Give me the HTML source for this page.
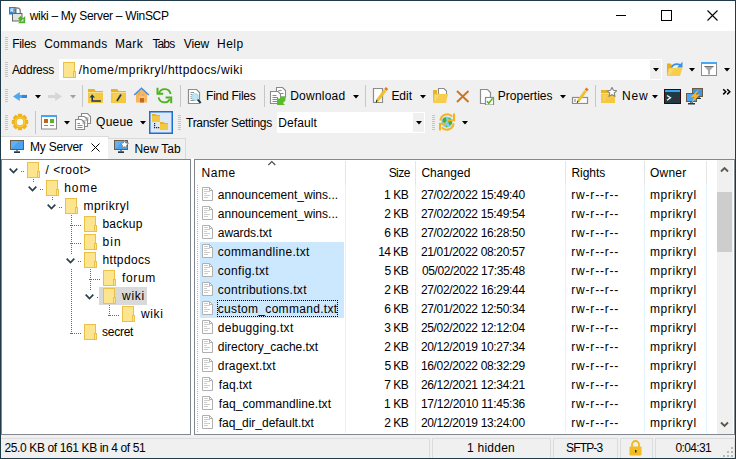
<!DOCTYPE html><html><head><meta charset="utf-8"><style>
*{margin:0;padding:0;box-sizing:border-box}
html,body{width:736px;height:459px;overflow:hidden;background:#f0f0f0}
.a{position:absolute;display:block}
.t{position:absolute;font-family:"Liberation Sans",sans-serif;font-size:12px;line-height:15px;white-space:pre;color:#000}
</style></head><body>
<div class="a" style="left:0px;top:0px;width:736px;height:31px;background:#fff"></div>
<svg class="a" style="left:8px;top:6px;" width="18" height="18" viewBox="0 0 18 18"><path d="M1 1H8.5V8.5H1Z" fill="#1f7fdc"/><path d="M2.3 2.3H6.5L5.2 3.6L7.2 5.6L5.6 7.2L3.6 5.2L2.3 6.5Z" fill="#bfe3ff"/><path d="M5.9 8V5.2a3.2 3.2 0 0 1 6.4 0V8" fill="none" stroke="#8c8c8c" stroke-width="1.5"/><rect x="4.5" y="7.5" width="9.5" height="7.5" fill="#e2e2e2" stroke="#666"/><path d="M17.2 10V17.2H10L12.3 14.9L10 12.6L12.6 10L14.9 12.3Z" fill="#4eb02c"/><path d="M12.5 15.5L15.5 12.5V15.5Z" fill="#fff" opacity="0.7"/></svg>
<div class="t" style="left:29.7px;top:9px;letter-spacing:-0.31px;">wiki – My Server – WinSCP</div>
<div class="a" style="left:616px;top:15px;width:10px;height:1px;background:#000"></div>
<svg class="a" style="left:661px;top:10px;" width="11" height="11" viewBox="0 0 11 11"><rect x="0.5" y="0.5" width="10" height="10" fill="none" stroke="#000"/></svg>
<svg class="a" style="left:707px;top:10px;" width="11" height="11" viewBox="0 0 11 11"><path d="M0.5 0.5L10.5 10.5M10.5 0.5L0.5 10.5" stroke="#000" stroke-width="1.1"/></svg>
<svg class="a" style="left:5px;top:37px;" width="3" height="13" viewBox="0 0 3 13"><rect x="0" y="0" width="3" height="1" fill="#c4c4c4"/><rect x="0" y="2" width="3" height="1" fill="#c4c4c4"/><rect x="0" y="4" width="3" height="1" fill="#c4c4c4"/><rect x="0" y="6" width="3" height="1" fill="#c4c4c4"/><rect x="0" y="8" width="3" height="1" fill="#c4c4c4"/><rect x="0" y="10" width="3" height="1" fill="#c4c4c4"/><rect x="0" y="12" width="3" height="1" fill="#c4c4c4"/></svg>
<div class="t" style="left:12.3px;top:37px;letter-spacing:-0.35px;">Files</div>
<div class="t" style="left:44.2px;top:37px;letter-spacing:0.24px;">Commands</div>
<div class="t" style="left:115.0px;top:37px;letter-spacing:0.33px;">Mark</div>
<div class="t" style="left:152.4px;top:37px;letter-spacing:-0.87px;">Tabs</div>
<div class="t" style="left:183.8px;top:37px;letter-spacing:-0.17px;">View</div>
<div class="t" style="left:217.1px;top:37px;letter-spacing:0.43px;">Help</div>
<svg class="a" style="left:5px;top:62px;" width="3" height="15" viewBox="0 0 3 15"><rect x="0" y="0" width="3" height="1" fill="#c4c4c4"/><rect x="0" y="2" width="3" height="1" fill="#c4c4c4"/><rect x="0" y="4" width="3" height="1" fill="#c4c4c4"/><rect x="0" y="6" width="3" height="1" fill="#c4c4c4"/><rect x="0" y="8" width="3" height="1" fill="#c4c4c4"/><rect x="0" y="10" width="3" height="1" fill="#c4c4c4"/><rect x="0" y="12" width="3" height="1" fill="#c4c4c4"/><rect x="0" y="14" width="3" height="1" fill="#c4c4c4"/></svg>
<div class="t" style="left:11.9px;top:63px;letter-spacing:-0.28px;">Address</div>
<div class="a" style="left:59px;top:59px;width:603px;height:21px;background:#fff"></div>
<div class="a" style="left:650px;top:60px;width:11px;height:19px;background:#f0f0f0"></div>
<svg class="a" style="left:653px;top:68px;" width="6" height="4" viewBox="0 0 6 4"><path d="M0 0H6L3 3.5Z" fill="#000"/></svg>
<svg class="a" style="left:63px;top:62px;" width="14" height="16" viewBox="0 0 14 16"><rect x="0.5" y="0.5" width="11" height="15" fill="#fde58f" stroke="#eac049"/><rect x="10.5" y="9.5" width="2" height="6" fill="#fde58f" stroke="#eac049"/></svg>
<div class="t" style="left:78.7px;top:63px;letter-spacing:0.48px;">/home/mprikryl/httpdocs/wiki</div>
<svg class="a" style="left:666px;top:61px;" width="17" height="16" viewBox="0 0 17 16"><path d="M1 2.5H4.5L5.5 3.5V15H1Z" fill="#e6ad1c"/><path d="M2.5 7H16.5L14 15H1Z" fill="#f6cd4e"/><path d="M3 8H8L4 14H2Z" fill="#fadb78" opacity="0.8"/><path d="M5.5 6.5A5.5 4 0 0 1 14.2 4" fill="none" stroke="#3a90e0" stroke-width="1.8"/><path d="M16.5 0.8V6.5H11Z" fill="#3a90e0"/></svg>
<svg class="a" style="left:689px;top:68px;" width="6" height="4" viewBox="0 0 6 4"><path d="M0 0H6L3 3.5Z" fill="#000"/></svg>
<svg class="a" style="left:701px;top:62px;" width="17" height="15" viewBox="0 0 17 15"><rect x="0.5" y="0.5" width="15" height="13" fill="#fff" stroke="#8c8c8c"/><rect x="0" y="0" width="16" height="2" fill="#4aa8f2"/><path d="M3 4H13L9 8.5V12.5H7V8.5Z" fill="#a8a8a8"/><path d="M3 4H13L12 5H4Z" fill="#707070"/></svg>
<svg class="a" style="left:724px;top:68px;" width="6" height="4" viewBox="0 0 6 4"><path d="M0 0H6L3 3.5Z" fill="#000"/></svg>
<svg class="a" style="left:5px;top:89px;" width="3" height="13" viewBox="0 0 3 13"><rect x="0" y="0" width="3" height="1" fill="#c4c4c4"/><rect x="0" y="2" width="3" height="1" fill="#c4c4c4"/><rect x="0" y="4" width="3" height="1" fill="#c4c4c4"/><rect x="0" y="6" width="3" height="1" fill="#c4c4c4"/><rect x="0" y="8" width="3" height="1" fill="#c4c4c4"/><rect x="0" y="10" width="3" height="1" fill="#c4c4c4"/><rect x="0" y="12" width="3" height="1" fill="#c4c4c4"/></svg>
<div class="a" style="left:82px;top:85px;width:1px;height:22px;background:#c6c6c6"></div>
<div class="a" style="left:180px;top:85px;width:1px;height:22px;background:#c6c6c6"></div>
<div class="a" style="left:264px;top:85px;width:1px;height:22px;background:#c6c6c6"></div>
<div class="a" style="left:365px;top:85px;width:1px;height:22px;background:#c6c6c6"></div>
<div class="a" style="left:595px;top:85px;width:1px;height:22px;background:#c6c6c6"></div>
<svg class="a" style="left:35px;top:95px;" width="6" height="4" viewBox="0 0 6 4"><path d="M0 0H6L3 3.5Z" fill="#000"/></svg>
<svg class="a" style="left:12px;top:91px;" width="17" height="11" viewBox="0 0 17 11"><path d="M1 5.4L7.8 0.9V3.9H15V7H7.8V9.9Z" fill="#4ea9f0"/><rect x="10" y="3.9" width="5" height="3.1" fill="#2f86dc"/></svg>
<svg class="a" style="left:47px;top:91px;" width="17" height="11" viewBox="0 0 17 11"><path d="M15 5.4L8.2 0.9V3.9H1V7H8.2V9.9Z" fill="#d6d6d6"/></svg>
<svg class="a" style="left:87px;top:88px;" width="17" height="16" viewBox="0 0 17 16"><path d="M1 1H7.5L8.5 3H16V15H1Z" fill="#e9b424"/><rect x="1" y="4" width="15" height="11" fill="#f5c842"/><rect x="1" y="4" width="15" height="1" fill="#fbe08a"/><path d="M3 6H9L4 14H3Z" fill="#f8d566" opacity="0.6"/><path d="M5.2 8.5V13H14" fill="none" stroke="#1d3a52" stroke-width="1.6"/><path d="M2.5 9.5L5.2 6.2L7.9 9.5Z" fill="#1d3a52"/></svg>
<svg class="a" style="left:110px;top:88px;" width="17" height="16" viewBox="0 0 17 16"><path d="M1 1H7.5L8.5 3H16V15H1Z" fill="#e9b424"/><rect x="1" y="4" width="15" height="11" fill="#f5c842"/><rect x="1" y="4" width="15" height="1" fill="#fbe08a"/><path d="M3 6H9L4 14H3Z" fill="#f8d566" opacity="0.6"/><path d="M7 13L11 6.5" stroke="#1d3a52" stroke-width="1.7"/></svg>
<svg class="a" style="left:133px;top:87px;" width="17" height="16" viewBox="0 0 17 16"><path d="M3 7L8.5 2.2L14 7V15.5H3Z" fill="#f8b45e"/><path d="M1.2 8L8.5 1.3L15.8 8" fill="none" stroke="#3b8fe2" stroke-width="1.5"/><rect x="7" y="10.5" width="4" height="5" fill="#c26a1a"/><rect x="6.3" y="9.8" width="5.4" height="0.9" fill="#fde6b8"/><circle cx="6" cy="6.5" r="0.7" fill="#7ab0e0"/><circle cx="10" cy="8" r="0.7" fill="#7ab0e0"/></svg>
<svg class="a" style="left:156px;top:87px;" width="17" height="17" viewBox="0 0 17 17"><path d="M3 6.2A6 6 0 0 1 14.6 7" fill="none" stroke="#4cb41c" stroke-width="1.8"/><path d="M1.5 0.8V6.8H7.2" fill="none" stroke="#4cb41c" stroke-width="2"/><path d="M2.6 10.3A6 6 0 0 0 13.8 12.2" fill="none" stroke="#4cb41c" stroke-width="1.8"/><path d="M9.6 10.5H15.2V16.2" fill="none" stroke="#4cb41c" stroke-width="2"/></svg>
<svg class="a" style="left:187px;top:88px;" width="17" height="17" viewBox="0 0 17 17"><path d="M1.5 1.5H9.5L12.5 4.5V15.5H1.5Z" fill="#fff" stroke="#8c8c8c" stroke-width="1.2"/><path d="M3.5 4.5H7M3.5 6.5H8M3.5 8.5H5M3.5 10.5H5M3.5 12.5H8" stroke="#909090"/><circle cx="8" cy="9" r="3.4" fill="#b8e8f6" stroke="#a8c8d0" stroke-width="0.7"/><path d="M10.6 11.6L13.8 14.8" stroke="#1b3545" stroke-width="1.9"/></svg>
<svg class="a" style="left:269px;top:87px;" width="18" height="18" viewBox="0 0 18 18"><path d="M7.5 0.5H13.5L16.5 3.5V10H7.5Z" fill="#fff" stroke="#8a8a8a" stroke-width="1.1"/><path d="M9.5 3.5H12.5M9.5 6.5H14.5" stroke="#8a8a8a"/><path d="M1.5 4.5H9L11.5 7V16.5H1.5Z" fill="#fff" stroke="#8a8a8a" stroke-width="1.1"/><path d="M3.5 8.5H7.5M3.5 10.5H9M3.5 12.5H8M3.5 14.5H8" stroke="#8a8a8a"/><path d="M8 10L10 12L12.5 9.5H16.5V13.5L14 16L16 18H8Z" fill="#58bb28"/></svg>
<svg class="a" style="left:372px;top:87px;" width="17" height="17" viewBox="0 0 17 17"><path d="M1.5 1.5H10.5V15.5H1.5Z" fill="#fff" stroke="#8c8c8c" stroke-width="1.2"/><path d="M5 14L13 3.5" stroke="#efc02e" stroke-width="3"/><path d="M4.2 15.5L5 13" stroke="#333" stroke-width="1.2"/><path d="M13.3 3L15 1" stroke="#e27c12" stroke-width="3"/></svg>
<svg class="a" style="left:431px;top:87px;" width="17" height="17" viewBox="0 0 17 17"><path d="M2 3H6V15H2Z" fill="#e9b424"/><path d="M7.5 1.5H13L15.5 4V9H7.5Z" fill="#fff" stroke="#8c8c8c" stroke-width="1.1"/><path d="M3 7H17L15 16H2Z" fill="#f6cd4e"/><path d="M4 8L8 8L4 15Z" fill="#fadf80" opacity="0.7"/></svg>
<svg class="a" style="left:456px;top:90px;" width="14" height="13" viewBox="0 0 14 13"><path d="M1 1L12.5 12M12.5 1L1 12" stroke="#d0741a" stroke-width="1.9"/></svg>
<svg class="a" style="left:478px;top:88px;" width="17" height="17" viewBox="0 0 17 17"><path d="M2.5 1.5H9.5L12.5 4.5V15.5H2.5Z" fill="#fff" stroke="#8c8c8c" stroke-width="1.2"/><rect x="7.5" y="9.5" width="8" height="7.5" fill="#fff" stroke="#8c8c8c" stroke-width="1.2"/><path d="M9 13.3L10.8 15.3L14.6 10.4" fill="none" stroke="#4ab81e" stroke-width="1.5"/></svg>
<svg class="a" style="left:571px;top:87px;" width="18" height="17" viewBox="0 0 18 17"><rect x="1.5" y="10.5" width="15" height="6" fill="#fff" stroke="#8c8c8c" stroke-width="1.2"/><path d="M4 12V15" stroke="#8c8c8c" stroke-width="1.2"/><path d="M7 14.5L14.5 4" stroke="#efc02e" stroke-width="3"/><path d="M6.2 15.8L7 14" stroke="#333" stroke-width="1.2"/><path d="M14.8 3.5L16.5 1.5" stroke="#e27c12" stroke-width="3"/></svg>
<svg class="a" style="left:599px;top:87px;" width="18" height="17" viewBox="0 0 18 17"><g transform="translate(1 2)"><path d="M1 1H7L8.5 3H15V14H1Z" fill="#e9b424"/><rect x="1" y="4" width="14" height="10" fill="#f5c842"/><rect x="1" y="4" width="14" height="1" fill="#fbe08a"/><path d="M2.5 6H8L3.5 13H2.5Z" fill="#f8d566" opacity="0.6"/></g><path d="M13.00 0.40L14.41 3.36L17.66 3.79L15.28 6.04L15.88 9.26L13.00 7.70L10.12 9.26L10.72 6.04L8.34 3.79L11.59 3.36Z" fill="#fff" stroke="#858585" stroke-width="1.1"/></svg>
<svg class="a" style="left:664px;top:89px;" width="17" height="15" viewBox="0 0 17 15"><rect x="0.5" y="0.5" width="16" height="14" fill="#1e3c46" stroke="#2a0a10"/><rect x="1" y="1" width="15" height="2" fill="#3aa2f2"/><path d="M3 6.5L6.5 8.8L3 11.2" fill="none" stroke="#fff" stroke-width="1.3"/><path d="M11 6h1v1h-1zM13 5h1v1h-1zM12 8h1v1h-1zM10 9h1v1h-1zM14 9h1v1h-1zM13 11h1v1h-1zM11 12h1v1h-1z" fill="#5a1a20"/></svg>
<svg class="a" style="left:686px;top:88px;" width="18" height="17" viewBox="0 0 18 17"><rect x="6.5" y="0.5" width="10" height="8" fill="#3c96e6" stroke="#6a5a44"/><rect x="10" y="9" width="4" height="1" fill="#777"/><rect x="9" y="10" width="6" height="1" fill="#1d3a48"/><rect x="0.5" y="5.5" width="10" height="8" fill="#4aa6f0" stroke="#6a5a44"/><rect x="4" y="14" width="3" height="1" fill="#777"/><rect x="2" y="15" width="7" height="1.5" fill="#1d3a48"/><path d="M13 1L4.5 9H8.5L5 15.5L14 6.5H10Z" fill="#f5b42a"/></svg>
<svg class="a" style="left:70px;top:95px;" width="6" height="4" viewBox="0 0 6 4"><path d="M0 0H6L3 3.5Z" fill="#a0a0a0"/></svg>
<div class="t" style="left:206.1px;top:89px;letter-spacing:-0.27px;">Find Files</div>
<div class="t" style="left:290.2px;top:89px;letter-spacing:0.23px;">Download</div>
<svg class="a" style="left:353px;top:95px;" width="6" height="4" viewBox="0 0 6 4"><path d="M0 0H6L3 3.5Z" fill="#000"/></svg>
<div class="t" style="left:391.4px;top:89px;letter-spacing:-0.03px;">Edit</div>
<svg class="a" style="left:420px;top:95px;" width="6" height="4" viewBox="0 0 6 4"><path d="M0 0H6L3 3.5Z" fill="#000"/></svg>
<div class="t" style="left:497.8px;top:89px;letter-spacing:0.00px;">Properties</div>
<svg class="a" style="left:560px;top:95px;" width="6" height="4" viewBox="0 0 6 4"><path d="M0 0H6L3 3.5Z" fill="#000"/></svg>
<div class="t" style="left:622.0px;top:89px;letter-spacing:0.85px;">New</div>
<svg class="a" style="left:652px;top:95px;" width="6" height="4" viewBox="0 0 6 4"><path d="M0 0H6L3 3.5Z" fill="#000"/></svg>
<svg class="a" style="left:722px;top:88px;" width="10" height="8" viewBox="0 0 10 8"><path d="M1.2 1.2L3.8 3.8L1.2 6.4M5.2 1.2L7.8 3.8L5.2 6.4" fill="none" stroke="#000" stroke-width="1.5"/></svg>
<svg class="a" style="left:5px;top:115px;" width="3" height="15" viewBox="0 0 3 15"><rect x="0" y="0" width="3" height="1" fill="#c4c4c4"/><rect x="0" y="2" width="3" height="1" fill="#c4c4c4"/><rect x="0" y="4" width="3" height="1" fill="#c4c4c4"/><rect x="0" y="6" width="3" height="1" fill="#c4c4c4"/><rect x="0" y="8" width="3" height="1" fill="#c4c4c4"/><rect x="0" y="10" width="3" height="1" fill="#c4c4c4"/><rect x="0" y="12" width="3" height="1" fill="#c4c4c4"/><rect x="0" y="14" width="3" height="1" fill="#c4c4c4"/></svg>
<div class="a" style="left:35px;top:111px;width:1px;height:23px;background:#c6c6c6"></div>
<svg class="a" style="left:64px;top:121px;" width="6" height="4" viewBox="0 0 6 4"><path d="M0 0H6L3 3.5Z" fill="#000"/></svg>
<svg class="a" style="left:11px;top:113px;" width="18" height="18" viewBox="0 0 18 18"><g transform="translate(9 9)"><rect x="-2.2" y="-8.2" width="4.4" height="4" rx="0.6" fill="#f0b41a" transform="rotate(0)"/><rect x="-2.2" y="-8.2" width="4.4" height="4" rx="0.6" fill="#f0b41a" transform="rotate(45)"/><rect x="-2.2" y="-8.2" width="4.4" height="4" rx="0.6" fill="#f0b41a" transform="rotate(90)"/><rect x="-2.2" y="-8.2" width="4.4" height="4" rx="0.6" fill="#f0b41a" transform="rotate(135)"/><rect x="-2.2" y="-8.2" width="4.4" height="4" rx="0.6" fill="#f0b41a" transform="rotate(180)"/><rect x="-2.2" y="-8.2" width="4.4" height="4" rx="0.6" fill="#f0b41a" transform="rotate(225)"/><rect x="-2.2" y="-8.2" width="4.4" height="4" rx="0.6" fill="#f0b41a" transform="rotate(270)"/><rect x="-2.2" y="-8.2" width="4.4" height="4" rx="0.6" fill="#f0b41a" transform="rotate(315)"/><circle r="6.2" fill="#f0b41a"/><circle r="5.3" fill="#f6cb45"/><circle r="4.1" fill="#eeb21a"/><circle r="3.3" fill="#fbfaf4"/></g></svg>
<svg class="a" style="left:41px;top:115px;" width="16" height="15" viewBox="0 0 16 15"><rect x="0.5" y="0.5" width="15" height="13.5" fill="#fff" stroke="#8a8a8a"/><rect x="0" y="0" width="16" height="2" fill="#42a4f2"/><rect x="3" y="4" width="4" height="4" fill="#c06418"/><rect x="9" y="4" width="4" height="4" fill="#52b62e"/><path d="M3 10.5H7M9 10.5H13" stroke="#8a8a8a"/></svg>
<svg class="a" style="left:75px;top:113px;" width="17" height="17" viewBox="0 0 17 17"><path d="M6.5 0.5H12.5L15.5 3.5V10.5H6.5Z" fill="#fff" stroke="#8a8a8a" stroke-width="1.1"/><path d="M3.5 3.5H9.5L12.5 6.5V13.5H3.5Z" fill="#fff" stroke="#8a8a8a" stroke-width="1.1"/><path d="M0.5 6.5H6.5L9.5 9.5V16.5H0.5Z" fill="#fff" stroke="#8a8a8a" stroke-width="1.1"/><path d="M10.5 5H13.5M10.5 7H13.5M7.5 8H10.5M7.5 10H10.5M2.5 10.5H5M2.5 12.5H7.5M2.5 14.5H7.5" stroke="#8a8a8a" stroke-width="1"/></svg>
<svg class="a" style="left:149px;top:111px;" width="24" height="23" viewBox="0 0 24 23"><rect x="0.75" y="0.75" width="22.5" height="21.5" fill="#dfe9f5" stroke="#1a6fcf" stroke-width="1.5"/><path d="M3 3H6.5L7.5 4H11V11H3Z" fill="#e9b424"/><rect x="3" y="5" width="8" height="6" fill="#f5c842"/><path d="M11 11H14.5L15.5 12H19V19H11Z" fill="#e9b424"/><rect x="11" y="13" width="8" height="6" fill="#f5c842"/><path d="M5 12h1.2v1.2h-1.2zM5 14h1.2v1.2h-1.2zM5 16h1.2v1.2h-1.2zM7 16h1.2v1.2h-1.2zM9 16h1.2v1.2h-1.2z" fill="#222"/></svg>
<svg class="a" style="left:438px;top:113px;" width="18" height="18" viewBox="0 0 18 18"><circle cx="9" cy="9" r="5.6" fill="#80ccf4"/><path d="M5 5.5L7.8 4.2L8.6 7.5L6.5 10.2L4.4 8.6Z M10.8 4.6L13.6 6.5L14 10.5L11.8 12.6L10.4 10Z M7.5 12.6L9.6 13.6L8.4 14.5Z" fill="#46b02a"/><path d="M2.4 7.6A6.8 6.8 0 0 1 14.2 3.6" fill="none" stroke="#f5b324" stroke-width="2.1"/><path d="M16 0.5V7.3H9.8" fill="none" stroke="#f5b324" stroke-width="2.1"/><path d="M15.6 10.4A6.8 6.8 0 0 1 3.8 14.4" fill="none" stroke="#f5b324" stroke-width="2.1"/><path d="M2 17.5V10.7H8.2" fill="none" stroke="#f5b324" stroke-width="2.1"/></svg>
<div class="t" style="left:96.1px;top:115px;letter-spacing:0.21px;">Queue</div>
<svg class="a" style="left:140px;top:121px;" width="6" height="4" viewBox="0 0 6 4"><path d="M0 0H6L3 3.5Z" fill="#000"/></svg>
<svg class="a" style="left:178px;top:115px;" width="3" height="15" viewBox="0 0 3 15"><rect x="0" y="0" width="3" height="1" fill="#c4c4c4"/><rect x="0" y="2" width="3" height="1" fill="#c4c4c4"/><rect x="0" y="4" width="3" height="1" fill="#c4c4c4"/><rect x="0" y="6" width="3" height="1" fill="#c4c4c4"/><rect x="0" y="8" width="3" height="1" fill="#c4c4c4"/><rect x="0" y="10" width="3" height="1" fill="#c4c4c4"/><rect x="0" y="12" width="3" height="1" fill="#c4c4c4"/><rect x="0" y="14" width="3" height="1" fill="#c4c4c4"/></svg>
<div class="t" style="left:186.1px;top:116px;letter-spacing:-0.30px;">Transfer Settings</div>
<div class="a" style="left:277px;top:112px;width:148px;height:21px;background:#fff"></div>
<div class="a" style="left:413px;top:113px;width:11px;height:19px;background:#f0f0f0"></div>
<svg class="a" style="left:416px;top:121px;" width="6" height="4" viewBox="0 0 6 4"><path d="M0 0H6L3 3.5Z" fill="#000"/></svg>
<div class="t" style="left:278.3px;top:116px;letter-spacing:0.07px;">Default</div>
<svg class="a" style="left:432px;top:115px;" width="3" height="15" viewBox="0 0 3 15"><rect x="0" y="0" width="3" height="1" fill="#c4c4c4"/><rect x="0" y="2" width="3" height="1" fill="#c4c4c4"/><rect x="0" y="4" width="3" height="1" fill="#c4c4c4"/><rect x="0" y="6" width="3" height="1" fill="#c4c4c4"/><rect x="0" y="8" width="3" height="1" fill="#c4c4c4"/><rect x="0" y="10" width="3" height="1" fill="#c4c4c4"/><rect x="0" y="12" width="3" height="1" fill="#c4c4c4"/><rect x="0" y="14" width="3" height="1" fill="#c4c4c4"/></svg>
<svg class="a" style="left:462px;top:121px;" width="6" height="4" viewBox="0 0 6 4"><path d="M0 0H6L3 3.5Z" fill="#000"/></svg>
<div class="a" style="left:1px;top:136px;width:108px;height:24px;background:#fff;border-top:1px solid #dadada;border-right:1px solid #dadada"></div>
<div class="a" style="left:108px;top:138px;width:78px;height:22px;background:#f0f0f0;border-top:1px solid #dadada;border-right:1px solid #dadada"></div>
<div class="t" style="left:30.1px;top:140px;letter-spacing:-0.24px;">My Server</div>
<svg class="a" style="left:10px;top:140px;" width="15" height="14" viewBox="0 0 15 14"><rect x="0.5" y="0.5" width="13" height="9" fill="#4aa2f0" stroke="#6b5d45"/><path d="M1 1H9L1 9Z" fill="#6cb8f6" opacity="0.7"/><rect x="6" y="10" width="2" height="1.3" fill="#8a8a8a"/><rect x="4" y="11.3" width="6" height="1.7" fill="#1d3a48"/></svg>
<svg class="a" style="left:114px;top:140px;" width="15" height="14" viewBox="0 0 15 14"><rect x="0.5" y="0.5" width="13" height="9" fill="#4aa2f0" stroke="#6b5d45"/><path d="M1 1H9L1 9Z" fill="#6cb8f6" opacity="0.7"/><rect x="6" y="10" width="2" height="1.3" fill="#8a8a8a"/><rect x="4" y="11.3" width="6" height="1.7" fill="#1d3a48"/><path d="M10.50 0.30L11.73 2.90L14.59 3.27L12.50 5.25L13.03 8.08L10.50 6.70L7.97 8.08L8.50 5.25L6.41 3.27L9.27 2.90Z" fill="#fff" stroke="#858585" stroke-width="1"/></svg>
<svg class="a" style="left:91px;top:143px;" width="9" height="9" viewBox="0 0 9 9"><path d="M0.5 0.5L8.5 8.5M8.5 0.5L0.5 8.5" stroke="#000" stroke-width="1"/></svg>
<div class="t" style="left:134.5px;top:142px;letter-spacing:-0.07px;">New Tab</div>
<div class="a" style="left:191px;top:158px;width:3px;height:277px;background:#fff"></div>
<div class="a" style="left:1px;top:159px;width:190px;height:276px;background:#fff;border:1px solid #828790"></div>
<div class="a" style="left:194px;top:159px;width:541px;height:276px;background:#fff;border:1px solid #828790"></div>
<div class="a" style="left:33px;top:179px;width:1px;height:11px;background:repeating-linear-gradient(to bottom,#6a6a6a 0 1px,transparent 1px 2px)"></div>
<div class="a" style="left:52px;top:197px;width:1px;height:11px;background:repeating-linear-gradient(to bottom,#6a6a6a 0 1px,transparent 1px 2px)"></div>
<div class="a" style="left:71px;top:215px;width:1px;height:119px;background:repeating-linear-gradient(to bottom,#6a6a6a 0 1px,transparent 1px 2px)"></div>
<div class="a" style="left:90px;top:269px;width:1px;height:29px;background:repeating-linear-gradient(to bottom,#6a6a6a 0 1px,transparent 1px 2px)"></div>
<div class="a" style="left:109px;top:305px;width:1px;height:11px;background:repeating-linear-gradient(to bottom,#6a6a6a 0 1px,transparent 1px 2px)"></div>
<div class="a" style="left:13px;top:171px;width:12px;height:1px;background:repeating-linear-gradient(to right,#6a6a6a 0 1px,transparent 1px 2px)"></div>
<div class="a" style="left:6px;top:165px;width:14px;height:13px;background:#fff"></div>
<div class="a" style="left:32px;top:189px;width:12px;height:1px;background:repeating-linear-gradient(to right,#6a6a6a 0 1px,transparent 1px 2px)"></div>
<div class="a" style="left:25px;top:183px;width:14px;height:13px;background:#fff"></div>
<div class="a" style="left:51px;top:207px;width:12px;height:1px;background:repeating-linear-gradient(to right,#6a6a6a 0 1px,transparent 1px 2px)"></div>
<div class="a" style="left:44px;top:201px;width:14px;height:13px;background:#fff"></div>
<div class="a" style="left:70px;top:225px;width:12px;height:1px;background:repeating-linear-gradient(to right,#6a6a6a 0 1px,transparent 1px 2px)"></div>
<div class="a" style="left:70px;top:243px;width:12px;height:1px;background:repeating-linear-gradient(to right,#6a6a6a 0 1px,transparent 1px 2px)"></div>
<div class="a" style="left:70px;top:261px;width:12px;height:1px;background:repeating-linear-gradient(to right,#6a6a6a 0 1px,transparent 1px 2px)"></div>
<div class="a" style="left:63px;top:255px;width:14px;height:13px;background:#fff"></div>
<div class="a" style="left:89px;top:279px;width:12px;height:1px;background:repeating-linear-gradient(to right,#6a6a6a 0 1px,transparent 1px 2px)"></div>
<div class="a" style="left:89px;top:297px;width:12px;height:1px;background:repeating-linear-gradient(to right,#6a6a6a 0 1px,transparent 1px 2px)"></div>
<div class="a" style="left:82px;top:291px;width:14px;height:13px;background:#fff"></div>
<div class="a" style="left:108px;top:315px;width:12px;height:1px;background:repeating-linear-gradient(to right,#6a6a6a 0 1px,transparent 1px 2px)"></div>
<div class="a" style="left:70px;top:333px;width:12px;height:1px;background:repeating-linear-gradient(to right,#6a6a6a 0 1px,transparent 1px 2px)"></div>
<svg class="a" style="left:9px;top:168px;" width="9" height="6" viewBox="0 0 9 6"><path d="M0.7 0.7L4.5 4.5L8.3 0.7" fill="none" stroke="#2b3e4a" stroke-width="1.7"/></svg>
<svg class="a" style="left:27px;top:162px;" width="14" height="16" viewBox="0 0 14 16"><rect x="0.5" y="0.5" width="11" height="15" fill="#fde58f" stroke="#eac049"/><rect x="10.5" y="9.5" width="2" height="6" fill="#fde58f" stroke="#eac049"/></svg>
<div class="t" style="left:45.6px;top:163px;letter-spacing:0.51px;">/ &lt;root&gt;</div>
<svg class="a" style="left:28px;top:186px;" width="9" height="6" viewBox="0 0 9 6"><path d="M0.7 0.7L4.5 4.5L8.3 0.7" fill="none" stroke="#2b3e4a" stroke-width="1.7"/></svg>
<svg class="a" style="left:46px;top:180px;" width="14" height="16" viewBox="0 0 14 16"><rect x="0.5" y="0.5" width="11" height="15" fill="#fde58f" stroke="#eac049"/><rect x="10.5" y="9.5" width="2" height="6" fill="#fde58f" stroke="#eac049"/></svg>
<div class="t" style="left:64.2px;top:181px;letter-spacing:0.97px;">home</div>
<svg class="a" style="left:47px;top:204px;" width="9" height="6" viewBox="0 0 9 6"><path d="M0.7 0.7L4.5 4.5L8.3 0.7" fill="none" stroke="#2b3e4a" stroke-width="1.7"/></svg>
<svg class="a" style="left:65px;top:198px;" width="14" height="16" viewBox="0 0 14 16"><rect x="0.5" y="0.5" width="11" height="15" fill="#fde58f" stroke="#eac049"/><rect x="10.5" y="9.5" width="2" height="6" fill="#fde58f" stroke="#eac049"/></svg>
<div class="t" style="left:83.4px;top:199px;letter-spacing:0.51px;">mprikryl</div>
<svg class="a" style="left:84px;top:216px;" width="14" height="16" viewBox="0 0 14 16"><rect x="0.5" y="0.5" width="11" height="15" fill="#fde58f" stroke="#eac049"/><rect x="10.5" y="9.5" width="2" height="6" fill="#fde58f" stroke="#eac049"/></svg>
<div class="t" style="left:102.4px;top:217px;letter-spacing:0.28px;">backup</div>
<svg class="a" style="left:84px;top:234px;" width="14" height="16" viewBox="0 0 14 16"><rect x="0.5" y="0.5" width="11" height="15" fill="#fde58f" stroke="#eac049"/><rect x="10.5" y="9.5" width="2" height="6" fill="#fde58f" stroke="#eac049"/></svg>
<div class="t" style="left:102.4px;top:235px;letter-spacing:1.10px;">bin</div>
<svg class="a" style="left:66px;top:258px;" width="9" height="6" viewBox="0 0 9 6"><path d="M0.7 0.7L4.5 4.5L8.3 0.7" fill="none" stroke="#2b3e4a" stroke-width="1.7"/></svg>
<svg class="a" style="left:84px;top:252px;" width="14" height="16" viewBox="0 0 14 16"><rect x="0.5" y="0.5" width="11" height="15" fill="#fde58f" stroke="#eac049"/><rect x="10.5" y="9.5" width="2" height="6" fill="#fde58f" stroke="#eac049"/></svg>
<div class="t" style="left:102.4px;top:253px;letter-spacing:0.37px;">httpdocs</div>
<svg class="a" style="left:103px;top:270px;" width="14" height="16" viewBox="0 0 14 16"><rect x="0.5" y="0.5" width="11" height="15" fill="#fde58f" stroke="#eac049"/><rect x="10.5" y="9.5" width="2" height="6" fill="#fde58f" stroke="#eac049"/></svg>
<div class="t" style="left:122.1px;top:271px;letter-spacing:0.60px;">forum</div>
<div class="a" style="left:99px;top:287px;width:48px;height:18px;background:#d9d9d9"></div>
<svg class="a" style="left:85px;top:294px;" width="9" height="6" viewBox="0 0 9 6"><path d="M0.7 0.7L4.5 4.5L8.3 0.7" fill="none" stroke="#2b3e4a" stroke-width="1.7"/></svg>
<svg class="a" style="left:103px;top:288px;" width="14" height="16" viewBox="0 0 14 16"><rect x="0.5" y="0.5" width="11" height="15" fill="#fde58f" stroke="#eac049"/><rect x="10.5" y="9.5" width="2" height="6" fill="#fde58f" stroke="#eac049"/></svg>
<div class="t" style="left:122.1px;top:289px;letter-spacing:0.67px;">wiki</div>
<svg class="a" style="left:122px;top:306px;" width="14" height="16" viewBox="0 0 14 16"><rect x="0.5" y="0.5" width="11" height="15" fill="#fde58f" stroke="#eac049"/><rect x="10.5" y="9.5" width="2" height="6" fill="#fde58f" stroke="#eac049"/></svg>
<div class="t" style="left:141.1px;top:307px;letter-spacing:0.57px;">wiki</div>
<svg class="a" style="left:84px;top:324px;" width="14" height="16" viewBox="0 0 14 16"><rect x="0.5" y="0.5" width="11" height="15" fill="#fde58f" stroke="#eac049"/><rect x="10.5" y="9.5" width="2" height="6" fill="#fde58f" stroke="#eac049"/></svg>
<div class="t" style="left:102.0px;top:325px;letter-spacing:-0.26px;">secret</div>
<div class="a" style="left:195px;top:160px;width:522px;height:24px;background:#fff"></div>
<div class="a" style="left:345px;top:161px;width:1px;height:24px;background:#e5e5e5"></div>
<div class="a" style="left:345px;top:185px;width:1px;height:248px;background:#e2f3fe"></div>
<div class="a" style="left:415px;top:161px;width:1px;height:24px;background:#e5e5e5"></div>
<div class="a" style="left:415px;top:185px;width:1px;height:248px;background:#e2f3fe"></div>
<div class="a" style="left:565px;top:161px;width:1px;height:24px;background:#e5e5e5"></div>
<div class="a" style="left:565px;top:185px;width:1px;height:248px;background:#e2f3fe"></div>
<div class="a" style="left:644px;top:161px;width:1px;height:24px;background:#e5e5e5"></div>
<div class="a" style="left:644px;top:185px;width:1px;height:248px;background:#e2f3fe"></div>
<div class="a" style="left:706px;top:161px;width:1px;height:24px;background:#e5e5e5"></div>
<div class="a" style="left:706px;top:185px;width:1px;height:248px;background:#e2f3fe"></div>
<svg class="a" style="left:268px;top:160px;" width="8" height="6" viewBox="0 0 8 6"><path d="M0.3 5L3.8 1.5L7.3 5" fill="none" stroke="#4a4a40" stroke-width="1.1"/></svg>
<div class="t" style="left:201.4px;top:166px;letter-spacing:0.60px;">Name</div>
<div class="t" style="left:388.7px;top:166px;letter-spacing:-0.57px;">Size</div>
<div class="t" style="left:421.4px;top:166px;letter-spacing:0.05px;">Changed</div>
<div class="t" style="left:571.4px;top:166px;letter-spacing:-0.04px;">Rights</div>
<div class="t" style="left:649.9px;top:166px;letter-spacing:0.27px;">Owner</div>
<div class="a" style="left:200px;top:242px;width:144px;height:76px;background:#cce8ff"></div>
<svg class="a" style="left:202px;top:187px;" width="12" height="15" viewBox="0 0 12 15"><path d="M0.5 0.5H7.5L10.5 3.5V13.5H0.5Z" fill="#fff" stroke="#b0b0b0"/><path d="M7.5 0.5V3.5H10.5" fill="none" stroke="#b0b0b0"/><path d="M2 2.5H6M2 4.5H8M2 6.5H5M2 8.5H8M2 10.5H6" stroke="#cccccc"/></svg>
<div class="t" style="left:217.8px;top:188px;letter-spacing:0.01px;">announcement_wins...</div>
<div class="t" style="left:384.0px;top:188px;letter-spacing:-0.40px;">1 KB</div>
<div class="t" style="left:420.9px;top:188px;letter-spacing:-0.33px;">27/02/2022 15:49:40</div>
<div class="t" style="left:571.3px;top:188px;letter-spacing:0.80px;">rw-r--r--</div>
<div class="t" style="left:650.0px;top:188px;letter-spacing:0.59px;">mprikryl</div>
<svg class="a" style="left:202px;top:206px;" width="12" height="15" viewBox="0 0 12 15"><path d="M0.5 0.5H7.5L10.5 3.5V13.5H0.5Z" fill="#fff" stroke="#b0b0b0"/><path d="M7.5 0.5V3.5H10.5" fill="none" stroke="#b0b0b0"/><path d="M2 2.5H6M2 4.5H8M2 6.5H5M2 8.5H8M2 10.5H6" stroke="#cccccc"/></svg>
<div class="t" style="left:217.8px;top:207px;letter-spacing:0.01px;">announcement_wins...</div>
<div class="t" style="left:384.2px;top:207px;letter-spacing:-0.47px;">2 KB</div>
<div class="t" style="left:420.9px;top:207px;letter-spacing:-0.33px;">27/02/2022 15:49:54</div>
<div class="t" style="left:571.3px;top:207px;letter-spacing:0.80px;">rw-r--r--</div>
<div class="t" style="left:650.0px;top:207px;letter-spacing:0.59px;">mprikryl</div>
<svg class="a" style="left:202px;top:225px;" width="12" height="15" viewBox="0 0 12 15"><path d="M0.5 0.5H7.5L10.5 3.5V13.5H0.5Z" fill="#fff" stroke="#b0b0b0"/><path d="M7.5 0.5V3.5H10.5" fill="none" stroke="#b0b0b0"/><path d="M2 2.5H6M2 4.5H8M2 6.5H5M2 8.5H8M2 10.5H6" stroke="#cccccc"/></svg>
<div class="t" style="left:217.8px;top:226px;letter-spacing:-0.08px;">awards.txt</div>
<div class="t" style="left:384.2px;top:226px;letter-spacing:-0.47px;">6 KB</div>
<div class="t" style="left:420.9px;top:226px;letter-spacing:-0.33px;">27/02/2022 16:28:50</div>
<div class="t" style="left:571.3px;top:226px;letter-spacing:0.80px;">rw-r--r--</div>
<div class="t" style="left:650.0px;top:226px;letter-spacing:0.59px;">mprikryl</div>
<svg class="a" style="left:202px;top:244px;" width="12" height="15" viewBox="0 0 12 15"><path d="M0.5 0.5H7.5L10.5 3.5V13.5H0.5Z" fill="#fff" stroke="#b0b0b0"/><path d="M7.5 0.5V3.5H10.5" fill="none" stroke="#b0b0b0"/><path d="M2 2.5H6M2 4.5H8M2 6.5H5M2 8.5H8M2 10.5H6" stroke="#cccccc"/></svg>
<div class="t" style="left:217.8px;top:245px;letter-spacing:0.30px;">commandline.txt</div>
<div class="t" style="left:378.3px;top:245px;letter-spacing:-0.62px;">14 KB</div>
<div class="t" style="left:420.9px;top:245px;letter-spacing:-0.33px;">21/01/2022 08:20:57</div>
<div class="t" style="left:571.3px;top:245px;letter-spacing:0.80px;">rw-r--r--</div>
<div class="t" style="left:650.0px;top:245px;letter-spacing:0.59px;">mprikryl</div>
<svg class="a" style="left:202px;top:263px;" width="12" height="15" viewBox="0 0 12 15"><path d="M0.5 0.5H7.5L10.5 3.5V13.5H0.5Z" fill="#fff" stroke="#b0b0b0"/><path d="M7.5 0.5V3.5H10.5" fill="none" stroke="#b0b0b0"/><path d="M2 2.5H6M2 4.5H8M2 6.5H5M2 8.5H8M2 10.5H6" stroke="#cccccc"/></svg>
<div class="t" style="left:217.8px;top:264px;letter-spacing:0.30px;">config.txt</div>
<div class="t" style="left:384.4px;top:264px;letter-spacing:-0.53px;">5 KB</div>
<div class="t" style="left:421.9px;top:264px;letter-spacing:-0.38px;">05/02/2022 17:35:48</div>
<div class="t" style="left:571.3px;top:264px;letter-spacing:0.80px;">rw-r--r--</div>
<div class="t" style="left:650.0px;top:264px;letter-spacing:0.59px;">mprikryl</div>
<svg class="a" style="left:202px;top:282px;" width="12" height="15" viewBox="0 0 12 15"><path d="M0.5 0.5H7.5L10.5 3.5V13.5H0.5Z" fill="#fff" stroke="#b0b0b0"/><path d="M7.5 0.5V3.5H10.5" fill="none" stroke="#b0b0b0"/><path d="M2 2.5H6M2 4.5H8M2 6.5H5M2 8.5H8M2 10.5H6" stroke="#cccccc"/></svg>
<div class="t" style="left:217.8px;top:283px;letter-spacing:0.29px;">contributions.txt</div>
<div class="t" style="left:384.2px;top:283px;letter-spacing:-0.47px;">2 KB</div>
<div class="t" style="left:420.9px;top:283px;letter-spacing:-0.33px;">27/02/2022 16:29:44</div>
<div class="t" style="left:571.3px;top:283px;letter-spacing:0.80px;">rw-r--r--</div>
<div class="t" style="left:650.0px;top:283px;letter-spacing:0.59px;">mprikryl</div>
<svg class="a" style="left:202px;top:301px;" width="12" height="15" viewBox="0 0 12 15"><path d="M0.5 0.5H7.5L10.5 3.5V13.5H0.5Z" fill="#fff" stroke="#b0b0b0"/><path d="M7.5 0.5V3.5H10.5" fill="none" stroke="#b0b0b0"/><path d="M2 2.5H6M2 4.5H8M2 6.5H5M2 8.5H8M2 10.5H6" stroke="#cccccc"/></svg>
<div class="t" style="left:217.8px;top:302px;letter-spacing:0.31px;">custom_command.txt</div>
<div class="t" style="left:384.2px;top:302px;letter-spacing:-0.47px;">6 KB</div>
<div class="t" style="left:420.9px;top:302px;letter-spacing:-0.33px;">27/01/2022 12:50:34</div>
<div class="t" style="left:571.3px;top:302px;letter-spacing:0.80px;">rw-r--r--</div>
<div class="t" style="left:650.0px;top:302px;letter-spacing:0.59px;">mprikryl</div>
<svg class="a" style="left:202px;top:320px;" width="12" height="15" viewBox="0 0 12 15"><path d="M0.5 0.5H7.5L10.5 3.5V13.5H0.5Z" fill="#fff" stroke="#b0b0b0"/><path d="M7.5 0.5V3.5H10.5" fill="none" stroke="#b0b0b0"/><path d="M2 2.5H6M2 4.5H8M2 6.5H5M2 8.5H8M2 10.5H6" stroke="#cccccc"/></svg>
<div class="t" style="left:217.8px;top:321px;letter-spacing:0.28px;">debugging.txt</div>
<div class="t" style="left:384.2px;top:321px;letter-spacing:-0.47px;">3 KB</div>
<div class="t" style="left:420.9px;top:321px;letter-spacing:-0.33px;">25/02/2022 12:12:04</div>
<div class="t" style="left:571.3px;top:321px;letter-spacing:0.80px;">rw-r--r--</div>
<div class="t" style="left:650.0px;top:321px;letter-spacing:0.59px;">mprikryl</div>
<svg class="a" style="left:202px;top:339px;" width="12" height="15" viewBox="0 0 12 15"><path d="M0.5 0.5H7.5L10.5 3.5V13.5H0.5Z" fill="#fff" stroke="#b0b0b0"/><path d="M7.5 0.5V3.5H10.5" fill="none" stroke="#b0b0b0"/><path d="M2 2.5H6M2 4.5H8M2 6.5H5M2 8.5H8M2 10.5H6" stroke="#cccccc"/></svg>
<div class="t" style="left:217.8px;top:340px;letter-spacing:-0.02px;">directory_cache.txt</div>
<div class="t" style="left:384.2px;top:340px;letter-spacing:-0.47px;">2 KB</div>
<div class="t" style="left:420.9px;top:340px;letter-spacing:-0.33px;">20/12/2019 10:27:34</div>
<div class="t" style="left:571.3px;top:340px;letter-spacing:0.80px;">rw-r--r--</div>
<div class="t" style="left:650.0px;top:340px;letter-spacing:0.59px;">mprikryl</div>
<svg class="a" style="left:202px;top:358px;" width="12" height="15" viewBox="0 0 12 15"><path d="M0.5 0.5H7.5L10.5 3.5V13.5H0.5Z" fill="#fff" stroke="#b0b0b0"/><path d="M7.5 0.5V3.5H10.5" fill="none" stroke="#b0b0b0"/><path d="M2 2.5H6M2 4.5H8M2 6.5H5M2 8.5H8M2 10.5H6" stroke="#cccccc"/></svg>
<div class="t" style="left:217.8px;top:359px;letter-spacing:0.17px;">dragext.txt</div>
<div class="t" style="left:384.4px;top:359px;letter-spacing:-0.53px;">5 KB</div>
<div class="t" style="left:420.9px;top:359px;letter-spacing:-0.33px;">16/02/2022 08:32:29</div>
<div class="t" style="left:571.3px;top:359px;letter-spacing:0.80px;">rw-r--r--</div>
<div class="t" style="left:650.0px;top:359px;letter-spacing:0.59px;">mprikryl</div>
<svg class="a" style="left:202px;top:377px;" width="12" height="15" viewBox="0 0 12 15"><path d="M0.5 0.5H7.5L10.5 3.5V13.5H0.5Z" fill="#fff" stroke="#b0b0b0"/><path d="M7.5 0.5V3.5H10.5" fill="none" stroke="#b0b0b0"/><path d="M2 2.5H6M2 4.5H8M2 6.5H5M2 8.5H8M2 10.5H6" stroke="#cccccc"/></svg>
<div class="t" style="left:218.8px;top:378px;letter-spacing:0.07px;">faq.txt</div>
<div class="t" style="left:384.2px;top:378px;letter-spacing:-0.47px;">7 KB</div>
<div class="t" style="left:420.9px;top:378px;letter-spacing:-0.33px;">26/12/2021 12:34:21</div>
<div class="t" style="left:571.3px;top:378px;letter-spacing:0.80px;">rw-r--r--</div>
<div class="t" style="left:650.0px;top:378px;letter-spacing:0.59px;">mprikryl</div>
<svg class="a" style="left:202px;top:396px;" width="12" height="15" viewBox="0 0 12 15"><path d="M0.5 0.5H7.5L10.5 3.5V13.5H0.5Z" fill="#fff" stroke="#b0b0b0"/><path d="M7.5 0.5V3.5H10.5" fill="none" stroke="#b0b0b0"/><path d="M2 2.5H6M2 4.5H8M2 6.5H5M2 8.5H8M2 10.5H6" stroke="#cccccc"/></svg>
<div class="t" style="left:218.8px;top:397px;letter-spacing:0.08px;">faq_commandline.txt</div>
<div class="t" style="left:384.0px;top:397px;letter-spacing:-0.40px;">1 KB</div>
<div class="t" style="left:420.9px;top:397px;letter-spacing:-0.27px;">17/12/2010 11:45:36</div>
<div class="t" style="left:571.3px;top:397px;letter-spacing:0.80px;">rw-r--r--</div>
<div class="t" style="left:650.0px;top:397px;letter-spacing:0.59px;">mprikryl</div>
<svg class="a" style="left:202px;top:415px;" width="12" height="15" viewBox="0 0 12 15"><path d="M0.5 0.5H7.5L10.5 3.5V13.5H0.5Z" fill="#fff" stroke="#b0b0b0"/><path d="M7.5 0.5V3.5H10.5" fill="none" stroke="#b0b0b0"/><path d="M2 2.5H6M2 4.5H8M2 6.5H5M2 8.5H8M2 10.5H6" stroke="#cccccc"/></svg>
<div class="t" style="left:218.8px;top:416px;letter-spacing:-0.02px;">faq_dir_default.txt</div>
<div class="t" style="left:384.2px;top:416px;letter-spacing:-0.47px;">2 KB</div>
<div class="t" style="left:420.9px;top:416px;letter-spacing:-0.33px;">20/12/2019 13:24:00</div>
<div class="t" style="left:571.3px;top:416px;letter-spacing:0.80px;">rw-r--r--</div>
<div class="t" style="left:650.0px;top:416px;letter-spacing:0.59px;">mprikryl</div>
<div class="a" style="left:217px;top:300px;width:121px;height:17px;border:1px dotted #000"></div>
<div class="a" style="left:197px;top:185px;width:1px;height:248px;background:repeating-linear-gradient(#7cc4f5 0 1px,transparent 1px 2px)"></div>
<div class="a" style="left:717px;top:160px;width:16px;height:274px;background:#f0f0f0"></div>
<div class="a" style="left:717px;top:192px;width:15px;height:60px;background:#cdcdcd"></div>
<svg class="a" style="left:720px;top:166px;" width="9" height="7" viewBox="0 0 9 7"><path d="M1 5.5L4.5 2L8 5.5" fill="none" stroke="#5a5a50" stroke-width="1.9"/></svg>
<svg class="a" style="left:720px;top:421px;" width="9" height="7" viewBox="0 0 9 7"><path d="M1 1.5L4.5 5L8 1.5" fill="none" stroke="#5a5a50" stroke-width="1.9"/></svg>
<div class="a" style="left:0px;top:438px;width:430px;height:20px;border:1px solid #dcdcdc;border-bottom:none"></div>
<div class="a" style="left:432px;top:438px;width:119px;height:20px;border:1px solid #dcdcdc;border-bottom:none"></div>
<div class="a" style="left:553px;top:438px;width:65px;height:20px;border:1px solid #dcdcdc;border-bottom:none"></div>
<div class="a" style="left:620px;top:438px;width:33px;height:20px;border:1px solid #dcdcdc;border-bottom:none"></div>
<div class="a" style="left:655px;top:438px;width:80px;height:20px;border:1px solid #dcdcdc;border-bottom:none"></div>
<div class="t" style="left:4.5px;top:441px;letter-spacing:-0.38px;">25.0 KB of 161 KB in 4 of 51</div>
<div class="t" style="left:467.0px;top:441px;letter-spacing:0.24px;">1 hidden</div>
<div class="t" style="left:566.1px;top:441px;letter-spacing:-0.86px;">SFTP-3</div>
<div class="t" style="left:675.5px;top:441px;letter-spacing:-0.65px;">0:04:31</div>
<svg class="a" style="left:629px;top:440px;" width="13" height="16" viewBox="0 0 13 16"><path d="M3 7V4.5a3.5 3.5 0 0 1 7 0V7" fill="none" stroke="#f0b820" stroke-width="1.8"/><rect x="0.5" y="6.5" width="12" height="9" rx="1" fill="#f2bc22"/><rect x="6" y="10" width="1.5" height="2.5" fill="#3a2a10"/></svg>
<svg class="a" style="left:723px;top:447px;" width="10" height="10" viewBox="0 0 10 10"><rect x="8" y="0" width="2" height="2" fill="#b8b8b8"/><rect x="4" y="4" width="2" height="2" fill="#b8b8b8"/><rect x="8" y="4" width="2" height="2" fill="#b8b8b8"/><rect x="0" y="8" width="2" height="2" fill="#b8b8b8"/><rect x="4" y="8" width="2" height="2" fill="#b8b8b8"/><rect x="8" y="8" width="2" height="2" fill="#b8b8b8"/></svg>
<div class="a" style="left:0px;top:0px;width:736px;height:459px;border:1px solid #1f3a48"></div>
</body></html>
